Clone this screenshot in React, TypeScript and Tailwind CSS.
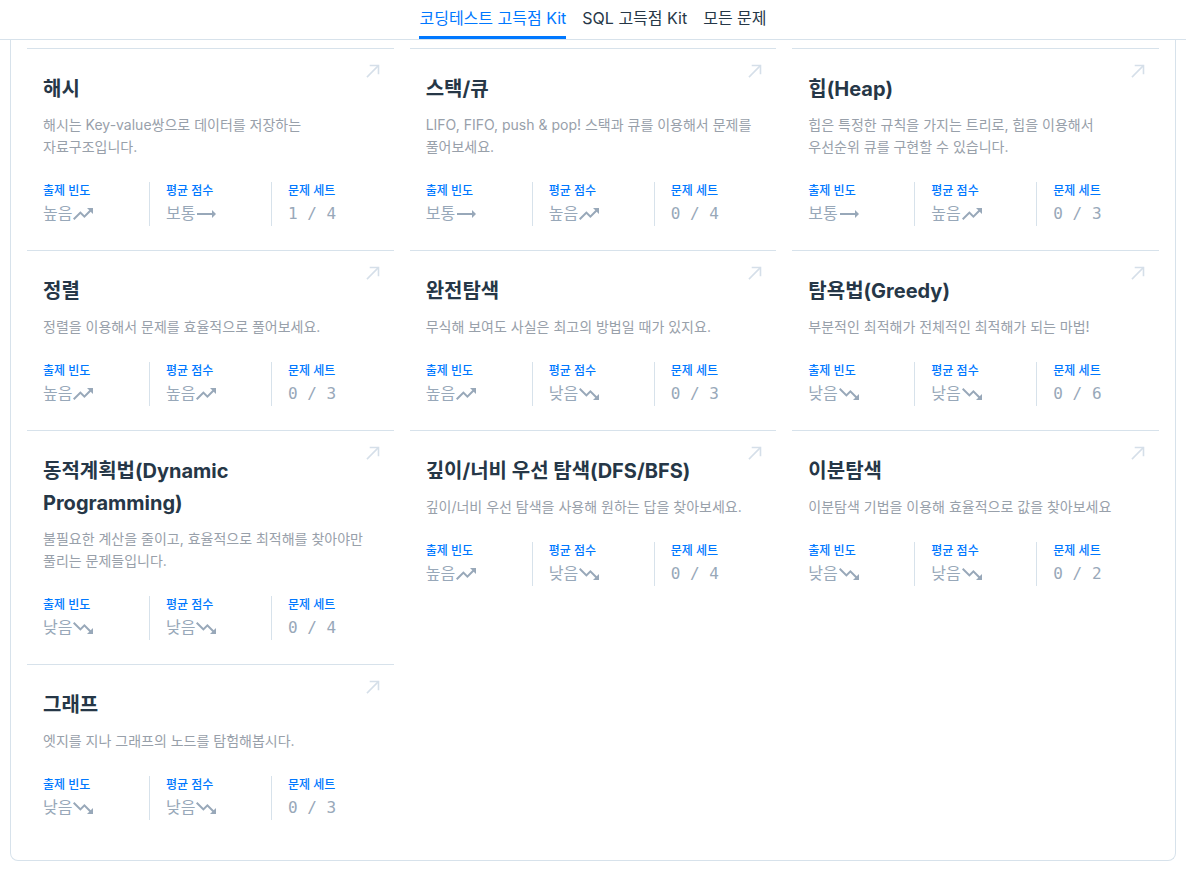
import React from "react";

type Level = "높음" | "보통" | "낮음";
type Kit = {
  title: string;
  desc: string;
  freq: Level;
  score: Level;
  solved: number;
  total: number;
};

const kits: Kit[] = [
  { title: "해시", desc: "해시는 Key-value쌍으로 데이터를 저장하는 자료구조입니다.", freq: "높음", score: "보통", solved: 1, total: 4 },
  { title: "스택/큐", desc: "LIFO, FIFO, push & pop! 스택과 큐를 이용해서 문제를 풀어보세요.", freq: "보통", score: "높음", solved: 0, total: 4 },
  { title: "힙(Heap)", desc: "힙은 특정한 규칙을 가지는 트리로, 힙을 이용해서 우선순위 큐를 구현할 수 있습니다.", freq: "보통", score: "높음", solved: 0, total: 3 },
  { title: "정렬", desc: "정렬을 이용해서 문제를 효율적으로 풀어보세요.", freq: "높음", score: "높음", solved: 0, total: 3 },
  { title: "완전탐색", desc: "무식해 보여도 사실은 최고의 방법일 때가 있지요.", freq: "높음", score: "낮음", solved: 0, total: 3 },
  { title: "탐욕법(Greedy)", desc: "부분적인 최적해가 전체적인 최적해가 되는 마법!", freq: "낮음", score: "낮음", solved: 0, total: 6 },
  { title: "동적계획법(Dynamic Programming)", desc: "불필요한 계산을 줄이고, 효율적으로 최적해를 찾아야만 풀리는 문제들입니다.", freq: "낮음", score: "낮음", solved: 0, total: 4 },
  { title: "깊이/너비 우선 탐색(DFS/BFS)", desc: "깊이/너비 우선 탐색을 사용해 원하는 답을 찾아보세요.", freq: "높음", score: "낮음", solved: 0, total: 4 },
  { title: "이분탐색", desc: "이분탐색 기법을 이용해 효율적으로 값을 찾아보세요", freq: "낮음", score: "낮음", solved: 0, total: 2 },
  { title: "그래프", desc: "엣지를 지나 그래프의 노드를 탐험해봅시다.", freq: "낮음", score: "낮음", solved: 0, total: 3 },
];

function TrendIcon({ level }: { level: Level }) {
  if (level === "높음")
    return (
      <svg width="20" height="20" viewBox="2 2 20 20" fill="currentColor" className="ml-px">
        <path d="M16 6l2.29 2.29-4.88 4.88-4-4L2 16.59 3.41 18l6-6 4 4 6.3-6.29L22 12V6z" />
      </svg>
    );
  if (level === "낮음")
    return (
      <svg width="20" height="20" viewBox="2 2 20 20" fill="currentColor" className="ml-px">
        <path d="M16 18l2.29-2.29-4.88-4.88-4 4L2 7.41 3.41 6l6 6 4-4 6.3 6.29L22 12v6z" />
      </svg>
    );
  return (
    <svg width="20" height="20" viewBox="2 2 20 20" fill="currentColor" className="ml-px">
      <path d="M22 12l-4-4v3H3v2h15v3z" />
    </svg>
  );
}

function ArrowNE() {
  return (
    <svg width="16" height="16" viewBox="0 0 16 16" fill="none" stroke="#d5dfe9" strokeWidth="1.6" strokeLinecap="square">
      <path d="M2.5 13.5L13 3" />
      <path d="M5.5 2.5H13.5V10.5" />
    </svg>
  );
}

function Stat({ label, children, cls }: { label: string; children: React.ReactNode; cls: string }) {
  return (
    <div className={cls}>
      <div className="mt-[1px] text-[12px] leading-[16px] font-medium text-[#0078ff]">{label}</div>
      <div className="mt-[5px] flex items-center text-[16px] leading-[20px] text-[#98a8b9] font-['DejaVu_Sans_Mono','Noto_Sans_CJK_KR',monospace]">
        {children}
      </div>
    </div>
  );
}

function Card({ kit }: { kit: Kit }) {
  return (
    <div className="relative border-t border-[#d7e2eb] px-4 pt-6 pb-6">
      <div className="absolute right-[13px] top-[14px]">
        <ArrowNE />
      </div>
      <h3 className="max-w-[300px] break-keep text-[20px] leading-[32px] font-bold text-[#263747]">{kit.title}</h3>
      <p className="mt-[9px] max-w-[330px] break-keep text-[14px] leading-[22px] text-[#98a0aa]">{kit.desc}</p>
      <div className="mt-6 flex h-[44px]">
        <Stat label="출제 빈도" cls="w-[106px] shrink-0">
          {kit.freq}
          <TrendIcon level={kit.freq} />
        </Stat>
        <Stat label="평균 점수" cls="w-[122px] shrink-0 border-l border-[#d7e2eb] pl-4">
          {kit.score}
          <TrendIcon level={kit.score} />
        </Stat>
        <Stat label="문제 세트" cls="flex-1 border-l border-[#d7e2eb] pl-4">
          {kit.solved} / {kit.total}
        </Stat>
      </div>
    </div>
  );
}

export default function App() {
  return (
    <div className="min-h-[869px] bg-white font-['Inter','Noto_Sans_CJK_KR',sans-serif]">
      <nav className="flex h-[40px] justify-center gap-4 border-b border-[#d7e2eb]">
        <div className="h-full border-b-[3px] border-[#0078ff] pt-[7px] text-[16px] leading-[22px] text-[#0078ff]">
          코딩테스트 고득점 Kit
        </div>
        <div className="pt-[7px] text-[16px] leading-[22px] text-[#263747]">SQL 고득점 Kit</div>
        <div className="pt-[7px] text-[16px] leading-[22px] text-[#263747]">모든 문제</div>
      </nav>
      <div className="mx-[10px] rounded-b-lg border-x border-b border-[#d7e2eb] px-4 pt-2 pb-4">
        <div className="grid grid-cols-3 gap-x-4">
          {kits.map((k) => (
            <Card key={k.title} kit={k} />
          ))}
        </div>
      </div>
    </div>
  );
}
